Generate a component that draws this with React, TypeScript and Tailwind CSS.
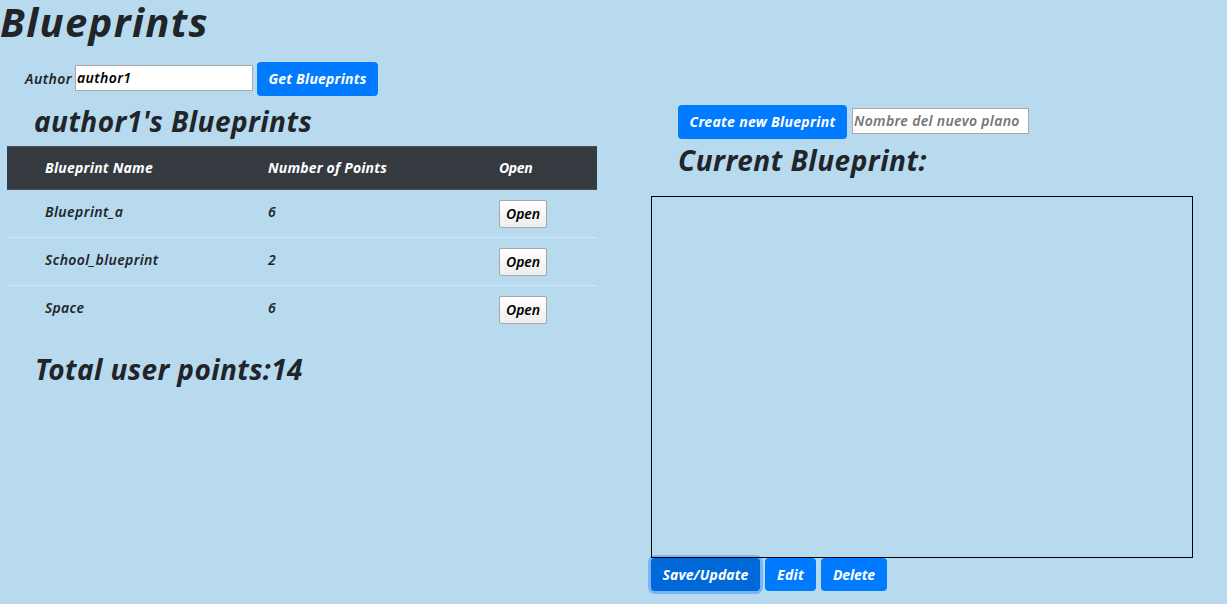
const blueprints = [
  { name: "Blueprint_a", points: 6, tracking: "tracking-[0.42px]" },
  { name: "School_blueprint", points: 2, tracking: "tracking-[0.37px]" },
  { name: "Space", points: 6, tracking: "tracking-[0.28px]" },
];

const primary =
  "shrink-0 rounded-[4px] pb-px text-center font-bold italic text-white whitespace-nowrap";
const field =
  "h-[26px] shrink-0 border border-[#a9a9a9] bg-white px-px pb-px font-semibold italic text-black outline-none placeholder:text-[#757575] placeholder:opacity-100";

export default function App() {
  return (
    <div className="h-[604px] w-[1227px] overflow-hidden bg-[#b8daef] font-['Noto_Sans',sans-serif] text-[14px] leading-[21px] font-semibold text-[#212529] italic">
      <h1 className="h-[62px] text-[40px] leading-[44px] font-bold tracking-[1.35px]">Blueprints</h1>
      <div className="flex h-[34px] items-center pl-[25px]">
        <label htmlFor="author" className="w-[50px] pb-[2px] tracking-[0.45px]">Author</label>
        <input id="author" defaultValue="author1" className={`${field} mb-[2px] w-[178px] tracking-[0.38px]`} />
        <button className={`${primary} ml-[4px] h-[34px] w-[121px] bg-[#007bff] tracking-[0.2px]`}>Get Blueprints</button>
      </div>
      <div className="flex">
        <section className="ml-[7px] w-[590px] shrink-0">
          <h2 className="h-[50px] pt-[8px] pl-[27px] text-[28px] leading-[34px] font-bold tracking-[0.45px]">author1's Blueprints</h2>
          <table className="w-full table-fixed border-collapse text-left">
            <colgroup>
              <col className="w-[249px]" />
              <col className="w-[231px]" />
              <col className="w-[110px]" />
            </colgroup>
            <thead>
              <tr className="h-[43px] border-y border-[#454d55] bg-[#343a40] text-white">
                <th className="pb-px pl-[38px] font-bold tracking-[0.23px]">Blueprint Name</th>
                <th className="pb-px pl-[12px] font-bold tracking-[0.17px]">Number of Points</th>
                <th className="pb-px pl-[12px] font-bold tracking-[-0.4px]">Open</th>
              </tr>
            </thead>
            <tbody>
              {blueprints.map((b) => (
                <tr key={b.name} className="h-[48px] border-b border-[#d0e7f5] align-top last:border-b-0">
                  <td className={`pt-[11px] pl-[38px] ${b.tracking}`}>{b.name}</td>
                  <td className="pt-[11px] pl-[12px]">{b.points}</td>
                  <td className="pt-[10px] pl-[12px]">
                    <button className="block h-[28px] w-[48px] rounded-[2px] border border-[#a6a6a6] bg-linear-to-b from-white to-[#eeeeee] pb-px text-center font-semibold tracking-[-0.1px] text-black italic">
                      Open
                    </button>
                  </td>
                </tr>
              ))}
            </tbody>
          </table>
          <h2 className="pt-[18px] pl-[28px] text-[28px] leading-[34px] font-bold tracking-[0.4px]">Total user points:14</h2>
        </section>
        <section className="ml-[54px] w-[542px] pt-[9px]">
          <div className="flex h-[34px] items-center pl-[27px]">
            <button className={`${primary} h-[34px] w-[169px] bg-[#007bff] tracking-[0.3px]`}>Create new Blueprint</button>
            <input placeholder="Nombre del nuevo plano" className={`${field} mb-[2px] ml-[5px] w-[177px] tracking-[0.33px]`} />
          </div>
          <h2 className="h-[57px] pt-[4px] pl-[27px] text-[28px] leading-[34px] font-bold tracking-[0.5px]">Current Blueprint:</h2>
          <div className="relative z-10 h-[362px] w-[542px] border border-black" />
          <div className="flex gap-[5px]">
            <button className={`${primary} h-[33px] w-[109px] bg-[#0069d9] tracking-[0.11px] ring-3 ring-[#76b5f6]`}>Save/Update</button>
            <button className={`${primary} h-[33px] w-[51px] bg-[#007bff] tracking-[0.25px]`}>Edit</button>
            <button className={`${primary} h-[33px] w-[66px] bg-[#007bff] tracking-[-0.13px]`}>Delete</button>
          </div>
        </section>
      </div>
    </div>
  );
}
